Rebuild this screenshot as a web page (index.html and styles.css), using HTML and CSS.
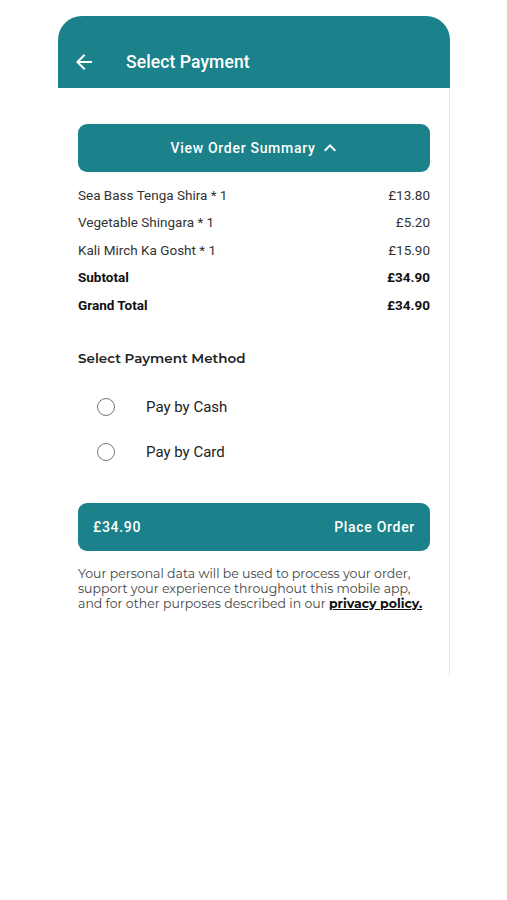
FILE: index.html
```html
<!DOCTYPE html>
<html lang="en">
<head>
  <meta charset="UTF-8">
  <title>Select Payment</title>
  <link rel="stylesheet" href="styles.css">
</head>
<body>

  <div class="phone">
    <div class="topbar">
      <svg class="back" viewBox="0 0 24 24" width="24" height="24"><path d="M20 11H7.83l5.59-5.59L12 4l-8 8 8 8 1.41-1.41L7.83 13H20v-2z" fill="#fff"/></svg>
      <h1>Select Payment</h1>
    </div>

    <div class="content">
      <button class="btn summary-btn">
        View Order Summary
        <svg viewBox="0 0 24 24" width="24" height="24"><path d="M12 8l-6 6 1.41 1.41L12 10.83l4.59 4.58L18 14z" fill="#fff"/></svg>
      </button>

      <div class="order-lines">
        <div class="line"><span>Sea Bass Tenga Shira * 1</span><span>£13.80</span></div>
        <div class="line"><span>Vegetable Shingara * 1</span><span>£5.20</span></div>
        <div class="line"><span>Kali Mirch Ka Gosht * 1</span><span>£15.90</span></div>
        <div class="line total"><span>Subtotal</span><span>£34.90</span></div>
        <div class="line total"><span>Grand Total</span><span>£34.90</span></div>
      </div>

      <h2>Select Payment Method</h2>

      <div class="methods">
        <label class="method"><span class="radio"></span>Pay by Cash</label>
        <label class="method"><span class="radio"></span>Pay by Card</label>
      </div>

      <button class="btn place-btn">
        <span>£34.90</span>
        <span>Place Order</span>
      </button>

      <p class="note">Your personal data will be used to process your order, support your experience throughout this mobile app, and for other purposes described in our <a href="#">privacy policy.</a></p>
    </div>
  </div>

</body>
</html>
```

FILE: styles.css
```css
body {
  margin: 0;
  background: #fff;
  font-family: Roboto, Arial, sans-serif;
}

.phone {
  width: 392px;
  margin: 16px 0 0 58px;
}

.topbar {
  height: 72px;
  background: #1b818a;
  border-radius: 24px 24px 0 0;
  display: flex;
  align-items: center;
  padding: 20px 0 0 14px;
  box-sizing: border-box;
}

.back {
  display: block;
}

.topbar h1 {
  margin: 0 0 0 30px;
  color: #fff;
  font-size: 17.5px;
  font-weight: 500;
  letter-spacing: 0.1px;
}

.content {
  height: 587px;
  box-sizing: border-box;
  border-right: 1.5px solid #e4e4e4;
  padding: 36px 19px 0 20px;
}

.btn {
  width: 100%;
  height: 48px;
  border: none;
  border-radius: 9px;
  background: #1b818a;
  color: #fff;
  font-family: Roboto, Arial, sans-serif;
  font-size: 14px;
  font-weight: 500;
  letter-spacing: 0.7px;
  display: flex;
  align-items: center;
}

.summary-btn {
  justify-content: center;
  gap: 2px;
  padding-left: 10px;
}

.order-lines {
  margin-top: 9px;
}

.line {
  height: 27.5px;
  display: flex;
  align-items: center;
  justify-content: space-between;
  font-size: 13.5px;
  color: #333;
}

.line.total {
  font-weight: 700;
  color: #111;
}

h2 {
  margin: 29px 0 0;
  font-family: Montserrat, "Open Sans", sans-serif;
  font-size: 13.5px;
  font-weight: 600;
  line-height: 20px;
  color: #222;
}

.methods {
  margin-top: 17px;
}

.method {
  height: 45px;
  display: flex;
  align-items: center;
  font-size: 15px;
  color: #222;
}

.radio {
  width: 16px;
  height: 16px;
  border: 1.5px solid #777;
  border-radius: 50%;
  margin: 0 31px 0 19px;
}

.place-btn {
  margin-top: 28px;
  justify-content: space-between;
  padding: 0 15px;
}

.note {
  margin: 15px 0 0;
  font-family: Montserrat, "Open Sans", sans-serif;
  font-size: 12.5px;
  line-height: 15px;
  color: #444;
}

.note a {
  color: #111;
  font-weight: 700;
  text-underline-offset: 1px;
}
```
